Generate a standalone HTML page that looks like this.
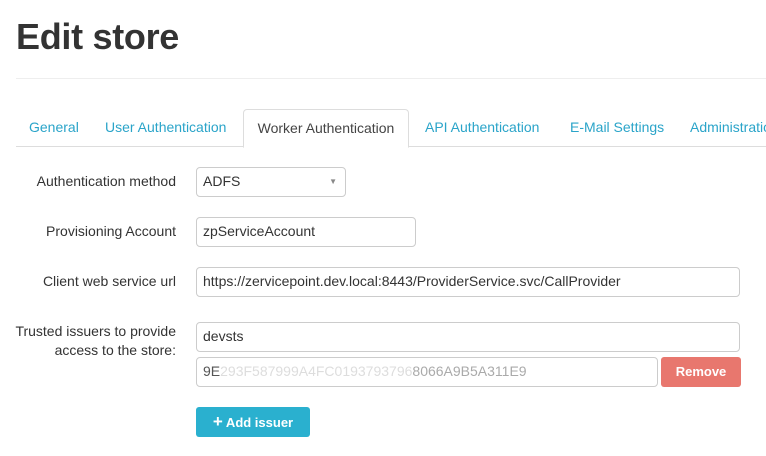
<!DOCTYPE html>
<html><head><style>
body{margin:0;width:766px;height:456px;overflow:hidden;background:#fff;font-family:"Liberation Sans",sans-serif;color:#333;position:relative}
.a{position:absolute}
h1{position:absolute;left:16px;top:16px;margin:0;font-size:36px;font-weight:bold;color:#333;letter-spacing:-0.3px}
.hr{left:16px;top:78px;width:750px;height:1px;background:#eee}
.tabline{left:16px;top:146px;width:750px;height:1px;background:#ddd}
.tab{top:119px;font-size:14px;color:#2aa4c9}
.act{left:243px;top:109px;width:164px;height:37px;border:1px solid #ddd;border-bottom:1px solid #fff;border-radius:4px 4px 0 0;background:#fff;color:#444;font-size:14px;text-align:center;line-height:36px}
.lbl{right:590px;font-size:14px;color:#333;text-align:right;line-height:19px}
.in{border:1px solid #ccc;border-radius:4px;box-sizing:border-box;font-size:14px;padding-left:6px;line-height:27px;color:#333;background:#fff}
</style></head><body>
<h1>Edit store</h1>
<div class="a hr"></div>
<div class="a tabline"></div>
<div class="a tab" style="left:29px">General</div>
<div class="a tab" style="left:105px">User Authentication</div>
<div class="a act">Worker Authentication</div>
<div class="a tab" style="left:425px">API Authentication</div>
<div class="a tab" style="left:570px">E-Mail Settings</div>
<div class="a tab" style="left:690px">Administration</div>

<div class="a lbl" style="top:172px">Authentication method</div>
<div class="a in" style="left:196px;top:167px;width:150px;height:30px">ADFS<span style="position:absolute;right:8px;top:0;font-size:8px;color:#888">▼</span></div>

<div class="a lbl" style="top:222px">Provisioning Account</div>
<div class="a in" style="left:196px;top:217px;width:220px;height:30px">zpServiceAccount</div>

<div class="a lbl" style="top:272px">Client web service url</div>
<div class="a in" style="left:196px;top:267px;width:544px;height:30px">https://zervicepoint.dev.local:8443/ProviderService.svc/CallProvider</div>

<div class="a lbl" style="top:322px">Trusted issuers to provide<br>access to the store:</div>
<div class="a in" style="left:196px;top:322px;width:544px;height:30px">devsts</div>
<div class="a in" style="left:196px;top:357px;width:462px;height:30px;color:#ddd"><span style="color:#555">9E</span>293F587999A4FC0193793796<span style="color:#aaa">8066A9B5A311E9</span></div>
<div class="a" style="left:661px;top:357px;width:80px;height:30px;background:#e8776e;border-radius:3px;color:#fff;font-weight:bold;font-size:13px;text-align:center;line-height:30px">Remove</div>
<div class="a" style="left:196px;top:407px;width:114px;height:30px;background:#2ab0cf;border-radius:3px;color:#fff;font-weight:bold;font-size:13px;text-align:center;line-height:30px"><span style="font-size:17px">+</span> Add issuer</div>
</body></html>
